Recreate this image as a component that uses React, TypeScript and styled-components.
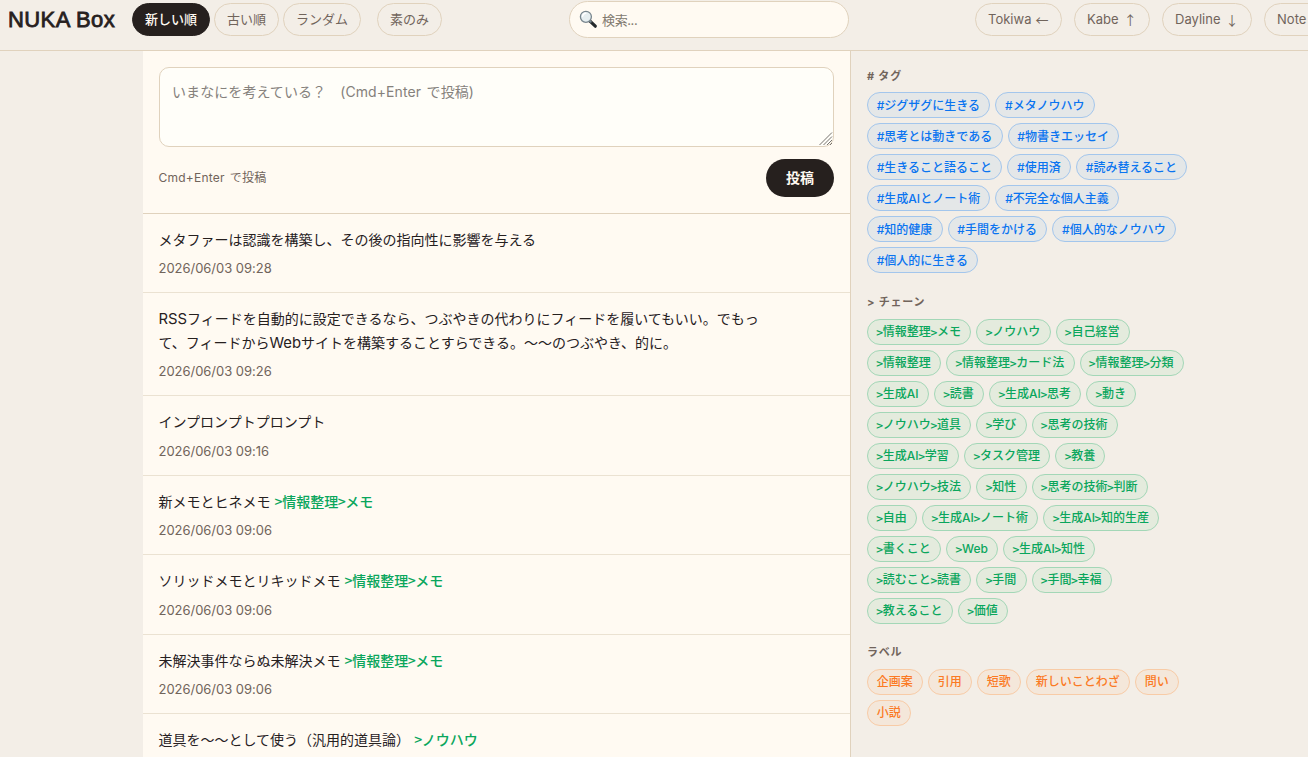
import React from 'react';
import styled, { createGlobalStyle, css } from 'styled-components';

const c = {
  page: '#f3eee7',
  surface: '#fffaf2',
  field: '#fffef9',
  line: '#e0d2bd',
  softLine: '#ebe2d2',
  ink: '#26201e',
  muted: '#71645b',
};

const Global = createGlobalStyle`
  *, *::before, *::after { box-sizing: border-box; }
  html, body { margin: 0; height: 100%; overflow: hidden; }
  body {
    background: ${c.page};
    color: ${c.ink};
    font-family: Inter, "Noto Sans CJK JP", sans-serif;
    font-size: 14px;
    line-height: 1.7;
  }
  button, input, textarea { font-family: inherit; }
`;

const Page = styled.div`
  height: 757px;
  overflow: hidden;
  display: flex;
  flex-direction: column;
`;

const Header = styled.header`
  height: 51px;
  flex: none;
  display: flex;
  align-items: flex-start;
  padding-left: 8px;
  border-bottom: 1px solid ${c.line};
  overflow: hidden;
`;

const Logo = styled.h1`
  margin: 0;
  width: 124px;
  flex: none;
  font-family: "Liberation Sans", Arial, sans-serif;
  font-size: 22px;
  font-weight: 400;
  line-height: 39px;
  letter-spacing: 0.4px;
  -webkit-text-stroke: 0.8px ${c.ink};
  white-space: nowrap;
`;

const SortGroup = styled.nav`
  display: flex;
  gap: 4px;
  margin-top: 3px;
`;

const pill = css`
  height: 33px;
  flex: none;
  display: inline-flex;
  align-items: center;
  justify-content: center;
  border: 1px solid ${c.line};
  border-radius: 17px;
  font-size: 13px;
  line-height: 1;
  white-space: nowrap;
`;

const SortButton = styled.button<{ $active?: boolean; $apart?: boolean }>`
  ${pill}
  padding: 0 12px;
  margin-left: ${p => (p.$apart ? '12px' : '0')};
  background: ${p => (p.$active ? c.ink : 'transparent')};
  border-color: ${p => (p.$active ? c.ink : c.line)};
  color: ${p => (p.$active ? c.surface : c.muted)};
  font-weight: ${p => (p.$active ? 500 : 400)};
`;

const Search = styled.label`
  width: 280px;
  height: 37px;
  flex: none;
  margin: 1px 0 0 127px;
  padding: 0 12px 0 9px;
  display: flex;
  align-items: center;
  gap: 4px;
  background: ${c.surface};
  border: 1px solid ${c.line};
  border-radius: 19px;
`;

const SearchInput = styled.input`
  flex: 1;
  min-width: 0;
  padding: 0;
  border: 0;
  outline: 0;
  background: transparent;
  font-size: 13px;
  letter-spacing: -0.4px;
  &::placeholder { color: #81796f; opacity: 1; }
`;

const Links = styled.nav`
  display: flex;
  gap: 12px;
  margin: 3px 0 0 126px;
`;

const LinkPill = styled.a<{ $w: number }>`
  ${pill}
  width: ${p => p.$w}px;
  padding-left: 12px;
  justify-content: flex-start;
  color: ${c.muted};
`;

const Arrow = styled.span<{ $gap: number }>`
  margin-left: ${p => p.$gap}px;
  font-family: "Noto Sans CJK JP", sans-serif;
`;

const Columns = styled.div`
  flex: 1;
  min-height: 0;
  display: grid;
  grid-template-columns: 708px 341px;
  padding-left: 143px;
`;

const Main = styled.main`
  background: ${c.surface};
  border-right: 1px solid ${c.line};
  overflow: hidden;
`;

const Composer = styled.form`
  height: 163px;
  padding: 16px 16px 0;
  display: flex;
  flex-direction: column;
  gap: 12px;
  border-bottom: 1px solid ${c.line};
`;

const FieldWrap = styled.div`
  position: relative;
  height: 80px;
`;

const Field = styled.textarea`
  display: block;
  width: 100%;
  height: 80px;
  padding: 12px;
  resize: none;
  outline: 0;
  background: ${c.field};
  border: 1px solid ${c.line};
  border-radius: 10px;
  font-size: 14px;
  line-height: 24px;
  &::placeholder { color: #85817c; opacity: 1; word-spacing: 1.5px; letter-spacing: 0.08px; }
`;

const Grip = styled.svg`
  position: absolute;
  right: 1px;
  bottom: 1px;
`;

const ComposerFoot = styled.div`
  display: flex;
  align-items: center;
  justify-content: space-between;
  margin-left: -0.5px;
  font-size: 12px;
  color: ${c.muted};
`;

const Hint = styled.span`
  letter-spacing: 0.24px;
  word-spacing: 1.2px;
`;

const Submit = styled.button`
  width: 68px;
  height: 38px;
  padding: 0 0 2px;
  border: 0;
  border-radius: 19px;
  background: ${c.ink};
  color: ${c.surface};
  font-size: 14px;
  font-weight: 700;
`;

const Feed = styled.div`
  margin-top: -0.4px;
`;

const Item = styled.article`
  padding: 14px 16px 13.6px 15.5px;
  border-bottom: 1px solid ${c.softLine};
`;

const ItemText = styled.p`
  margin: 0 0 6.4px;
  max-width: 612px;
  line-height: 23.8px;
`;

const Latin = styled.span`
  font-size: 14.8px;
  line-height: 1;
`;

const ChainRef = styled.a`
  margin-left: 0.5px;
  color: #0aa65c;
  font-weight: 500;
`;

const Time = styled.time`
  display: block;
  font-size: 13px;
  line-height: 20.7px;
  letter-spacing: -0.03px;
  color: ${c.muted};
`;

const Aside = styled.aside`
  padding: 15.6px 0 0 16px;
  display: flex;
  flex-direction: column;
  gap: 19.8px;
`;

const Heading = styled.h2`
  margin: 0 0 7.4px;
  padding-top: 1px;
  font-size: 11px;
  font-weight: 700;
  line-height: 17.2px;
  letter-spacing: 0.8px;
  color: ${c.muted};
`;

const Chips = styled.div`
  display: flex;
  flex-wrap: wrap;
  gap: 5px;
`;

type Tone = 'tag' | 'chain' | 'label';
const tones: Record<Tone, [string, string, string]> = {
  tag: ['#0a74f0', '#e4e7e8', '#a3c6ec'],
  chain: ['#0aa65c', '#e4ebdd', '#a3d7b7'],
  label: ['#fb7a24', '#f4e7da', '#f8cba6'],
};

const Chip = styled.a<{ $tone: Tone }>`
  height: 26px;
  display: inline-flex;
  align-items: center;
  padding: 1px 9.3px 0 8.7px;
  border: 1px solid ${p => tones[p.$tone][2]};
  border-radius: 13px;
  background: ${p => tones[p.$tone][1]};
  color: ${p => tones[p.$tone][0]};
  font-size: 12px;
  font-weight: 500;
  line-height: 1;
  white-space: nowrap;
`;

const Mark = styled.span<{ $w: number }>`
  display: inline-block;
  width: ${p => p.$w}em;
`;

const ChainMark = styled(Mark)`
  font-family: "Noto Sans CJK JP", sans-serif;
  text-indent: -0.03em;
`;

const marked = (text: string) =>
  text.split(/([#>])/).filter(Boolean).map((part, i) =>
    part === '#' ? <Mark key={i} $w={0.64}>#</Mark>
      : part === '>' ? <ChainMark key={i} $w={0.515}>&gt;</ChainMark>
      : <span key={i}>{part}</span>);

const spaced = (text: string) =>
  text.split(/([A-Za-z]+)/).filter(Boolean).map((part, i) =>
    /^[A-Za-z]/.test(part) ? <Latin key={i}>{part}</Latin> : <React.Fragment key={i}>{part}</React.Fragment>);

const tags = ['ジグザグに生きる', 'メタノウハウ', '思考とは動きである', '物書きエッセイ', '生きること語ること', '使用済', '読み替えること', '生成AIとノート術', '不完全な個人主義', '知的健康', '手間をかける', '個人的なノウハウ', '個人的に生きる'].map(t => '#' + t);
const chains = ['情報整理>メモ', 'ノウハウ', '自己経営', '情報整理', '情報整理>カード法', '情報整理>分類', '生成AI', '読書', '生成AI>思考', '動き', 'ノウハウ>道具', '学び', '思考の技術', '生成AI>学習', 'タスク管理', '教養', 'ノウハウ>技法', '知性', '思考の技術>判断', '自由', '生成AI>ノート術', '生成AI>知的生産', '書くこと', 'Web', '生成AI>知性', '読むこと>読書', '手間', '手間>幸福', '教えること', '価値'].map(t => '>' + t);
const labels = ['企画案', '引用', '短歌', '新しいことわざ', '問い', '小説'];

const sections: { title: string; tone: Tone; items: string[] }[] = [
  { title: '# タグ', tone: 'tag', items: tags },
  { title: '> チェーン', tone: 'chain', items: chains },
  { title: 'ラベル', tone: 'label', items: labels },
];

const posts: { text: string; chain?: string; time: string }[] = [
  { text: 'メタファーは認識を構築し、その後の指向性に影響を与える', time: '09:28' },
  { text: 'RSSフィードを自動的に設定できるなら、つぶやきの代わりにフィードを履いてもいい。でもって、フィードからWebサイトを構築することすらできる。〜〜のつぶやき、的に。', time: '09:26' },
  { text: 'インプロンプトプロンプト', time: '09:16' },
  { text: '新メモとヒネメモ', chain: '>情報整理>メモ', time: '09:06' },
  { text: 'ソリッドメモとリキッドメモ', chain: '>情報整理>メモ', time: '09:06' },
  { text: '未解決事件ならぬ未解決メモ', chain: '>情報整理>メモ', time: '09:06' },
  { text: '道具を〜〜として使う（汎用的道具論）', chain: '>ノウハウ', time: '' },
];

const links: { name: string; arrow?: string; width: number; gap: number }[] = [
  { name: 'Tokiwa', arrow: '←', width: 87, gap: 4 },
  { name: 'Kabe', arrow: '↑', width: 76, gap: 5 },
  { name: 'Dayline', arrow: '↓', width: 90, gap: 5 },
  { name: 'Note', width: 80, gap: 4 },
];

const SearchIcon = () => (
  <svg width="19" height="19" viewBox="0 0 19 19">
    <path d="M11 11.2 L16.3 16.2" stroke="#24292c" strokeWidth="3.2" strokeLinecap="round" />
    <path d="M10.6 10.6 L12.4 12.3" stroke="#7c8b93" strokeWidth="1.6" />
    <circle cx="6.9" cy="6.8" r="5.5" fill="#e6eef0" stroke="#77858d" strokeWidth="1.3" />
    <path d="M3.6 6.2 A3.6 3.6 0 0 1 6.8 3.3" fill="none" stroke="#fff" strokeWidth="1.4" strokeLinecap="round" />
  </svg>
);

export default function App() {
  return (
    <Page>
      <Global />
      <Header>
        <Logo>NUKA Box</Logo>
        <SortGroup>
          <SortButton $active>新しい順</SortButton>
          <SortButton>古い順</SortButton>
          <SortButton>ランダム</SortButton>
          <SortButton $apart>素のみ</SortButton>
        </SortGroup>
        <Search>
          <SearchIcon />
          <SearchInput placeholder="検索..." />
        </Search>
        <Links>
          {links.map(l => (
            <LinkPill key={l.name} $w={l.width}>
              {l.name}
              {l.arrow && <Arrow $gap={l.gap}>{l.arrow}</Arrow>}
            </LinkPill>
          ))}
        </Links>
      </Header>
      <Columns>
        <Main>
          <Composer>
            <FieldWrap>
              <Field placeholder="いまなにを考えている？　(Cmd+Enter で投稿)" />
              <Grip width="14" height="14" viewBox="0 0 14 14" stroke="#77736f" strokeWidth="1">
                <path d="M0.5 13 L13 0.5 M4.5 13 L13 4.5 M8 13 L13 8 M11 13 L13 11" fill="none" />
              </Grip>
            </FieldWrap>
            <ComposerFoot>
              <Hint>Cmd+Enter で投稿</Hint>
              <Submit type="button">投稿</Submit>
            </ComposerFoot>
          </Composer>
          <Feed>
            {posts.map(post => (
              <Item key={post.text}>
                <ItemText>
                  {spaced(post.text)}
                  {post.chain && <> <ChainRef>{marked(post.chain)}</ChainRef></>}
                </ItemText>
                {post.time && <Time>2026/06/03 {post.time}</Time>}
              </Item>
            ))}
          </Feed>
        </Main>
        <Aside>
          {sections.map(s => (
            <section key={s.title}>
              <Heading>{s.title}</Heading>
              <Chips>
                {s.items.map(t => <Chip key={t} $tone={s.tone}>{marked(t)}</Chip>)}
              </Chips>
            </section>
          ))}
        </Aside>
      </Columns>
    </Page>
  );
}
